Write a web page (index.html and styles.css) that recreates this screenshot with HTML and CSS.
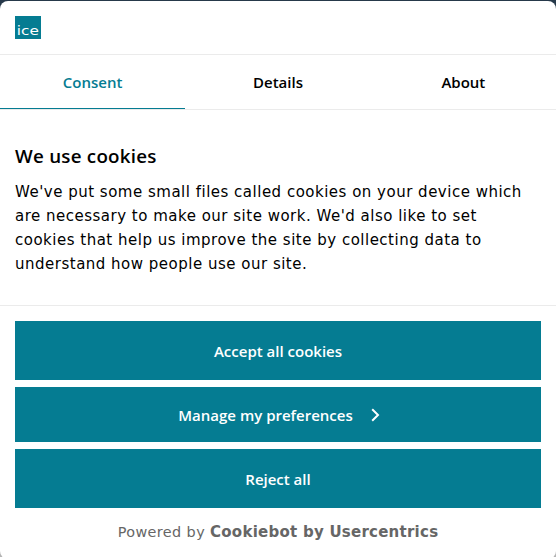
FILE: index.html
```html
<!DOCTYPE html>
<html lang="en">
<head>
<meta charset="utf-8">
<title>Cookie consent</title>
<link rel="stylesheet" href="styles.css">
</head>
<body>
<main class="dialog">
  <header class="header">
    <svg class="logo" width="26" height="23" viewBox="0 0 26 23" role="img" aria-label="ice"><rect width="26" height="23" fill="#057c92"/><text class="logo-text" x="1.800" y="18.500" textLength="22" lengthAdjust="spacingAndGlyphs">ice</text></svg>
  </header>
  <nav class="tabs">
    <a class="tab active">Consent</a>
    <a class="tab">Details</a>
    <a class="tab">About</a>
  </nav>
  <section class="body">
    <h2 class="title">We use cookies</h2>
    <p class="text">We've put some small files called cookies on your device which are necessary to make our site work. We'd also like to set cookies that help us improve the site by collecting data to understand how people use our site.</p>
  </section>
  <footer class="footer">
    <button class="button">Accept all cookies</button>
    <button class="button customize">Manage my preferences<svg class="chevron" width="9" height="14" viewBox="0 0 9 14"><path d="M1.200 1.200 7 7l-5.800 5.800" fill="none" stroke="#fff" stroke-width="2"/></svg></button>
    <button class="button">Reject all</button>
    <div class="powered">Powered by <b>Cookiebot by Usercentrics</b></div>
  </footer>
</main>
</body>
</html>
```
FILE: styles.css
```css
* { box-sizing: border-box; }
body { margin: 0; background: linear-gradient(#26394a 0 50%, #b4b4b4 50%); height: 557px; overflow: hidden; padding-top: 1px; }
.dialog { background: #fff; border-radius: 8px; height: 558px; display: flex; flex-direction: column; font-family: "Open Sans", sans-serif; color: #000; }
.header { height: 54px; padding: 15px; border-bottom: 1px solid #ebebeb; }
.logo { display: block; }
.logo-text { font: 11.5px "DejaVu Sans", sans-serif; fill: #fff; }
.tabs { display: flex; height: 55px; border-bottom: 1px solid #ebebeb; }
.tab { flex: 1; display: flex; align-items: center; justify-content: center; font-size: 15px; font-weight: 600; border-bottom: 1px solid transparent; }
.active { color: #057c92; border-bottom-color: #057c92; }
.body { height: 196px; padding: 33px 15px 0; border-bottom: 1px solid #ebebeb; }
.title { margin: 0; font-size: 18.75px; line-height: 26px; font-weight: 600; letter-spacing: .25px; }
.text { margin: 11px 0 0; font: 15px/24px "DejaVu Sans", sans-serif; letter-spacing: .5px; }
.footer { padding: 15px 15px 0; display: flex; flex-direction: column; }
.button { display: flex; align-items: center; justify-content: center; width: 100%; height: 59px; margin: 0 0 7px; padding: 0; border: 0; background: #057c92; color: #fff; font: 600 15px "Open Sans", sans-serif; }
.customize { height: 55px; padding-left: 2px; }
.chevron { margin-left: 18px; }
.powered { margin-top: 8px; text-align: center; font: 14.4px/18px "DejaVu Sans", sans-serif; color: #666; letter-spacing: .4px; }
.powered b { font-size: 15px; letter-spacing: .25px; }
```
